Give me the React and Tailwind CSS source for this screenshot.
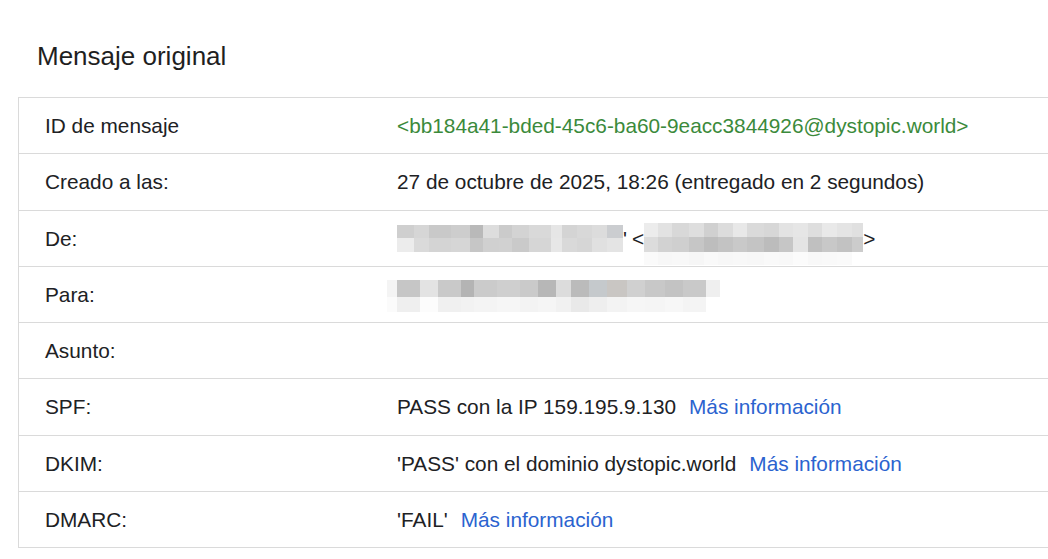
import React from "react";

const font = { fontFamily: '"Liberation Sans", Arial, sans-serif' };

// blurred blocks: each row is a list of [width, color]
const fromName = [
  [
    [17, "#cfcfcf"], [15, "#d6d6d6"], [22, "#c9c9c9"], [19, "#cdcdcd"], [13, "#b9b9b9"], [16, "#dddddd"], [13, "#cbcbcb"], [17, "#d3d3d3"], [22, "#d9d9d9"], [11, "#e6e6e6"], [15, "#d4d4d4"], [15, "#d8d8d8"], [15, "#dcdcdc"], [16, "#cbcdd0"],
  ],
  [
    [17, "#ececec"], [15, "#dadada"], [22, "#d4d4d4"], [19, "#d6d6d6"], [13, "#c6c6c6"], [16, "#d0d0d0"], [13, "#d1d1d1"], [17, "#cacaca"], [22, "#d6d6d6"], [11, "#e7e7e7"], [15, "#d9d9d9"], [15, "#d6d6d6"], [15, "#e0e0e0"], [16, "#e4e4e4"],
  ],
];

const fromMail = [
  [
    [14, "#ececec"], [14, "#e2e2e2"], [17, "#d8d8d8"], [15, "#dedede"], [14, "#d0d0d0"], [15, "#dcdcdc"], [14, "#e8e8e8"], [17, "#dadada"], [15, "#d7d7d7"], [14, "#e3e3e3"], [15, "#e6e6e6"], [14, "#dedede"], [15, "#e9e9e9"], [15, "#e4e4e4"], [11, "#e0e0e0"],
  ],
  [
    [14, "#dcdcdc"], [14, "#d2d2d2"], [17, "#cfcfcf"], [15, "#c6c6c6"], [14, "#bdbdbd"], [15, "#c3c3c3"], [14, "#c9c9c9"], [17, "#c4c4c4"], [15, "#bcbcbc"], [14, "#c6c6c6"], [15, "#e4e4e4"], [14, "#c0c0c0"], [15, "#c8c8c8"], [15, "#c2c2c2"], [11, "#cccccc"],
  ],
  [
    [14, "#fafafa"], [14, "#f7f7f7"], [17, "#f8f8f8"], [15, "#f6f6f6"], [14, "#f9f9f9"], [15, "#f7f7f7"], [14, "#f8f8f8"], [17, "#f7f7f7"], [15, "#f9f9f9"], [14, "#f8f8f8"], [15, "#fbfbfb"], [14, "#f8f8f8"], [15, "#f9f9f9"], [15, "#fafafa"], [11, "#ffffff"],
  ],
];

const toMail = [
  [
    [10, "#f4f4f4"], [23, "#c6c6c6"], [18, "#e3e3e3"], [23, "#c9c9c9"], [13, "#b4b4b4"], [23, "#cbcbcb"], [23, "#cfcfcf"], [18, "#cacaca"], [18, "#b7b7b7"], [15, "#dcdcdc"], [18, "#bbbbbb"], [18, "#c5c9cc"], [20, "#c9c6c3"], [18, "#d0d0d0"], [20, "#c8c8c8"], [18, "#c3c3c3"], [23, "#c9c9c9"], [14, "#efefef"],
  ],
  [
    [10, "#fbfbfb"], [23, "#efefef"], [18, "#fcfcfc"], [23, "#f0f0f0"], [13, "#f2f2f2"], [23, "#f4f4f4"], [23, "#f6f6f6"], [18, "#f3f3f3"], [18, "#f5f5f5"], [15, "#f1f1f1"], [18, "#e9e9e9"], [18, "#eeeeee"], [20, "#f3f3f3"], [18, "#f6f6f6"], [20, "#f5f5f5"], [18, "#f7f7f7"], [23, "#f4f4f4"], [14, "#ffffff"],
  ],
];

const Pixelated = ({ rows, rowHeights }) => (
  <span className="inline-flex flex-col align-middle">
    {rows.map((row, i) => (
      <span key={i} className="flex">
        {row.map(([w, c], j) => (
          <span
            key={j}
            className="block"
            style={{ width: w, height: rowHeights[i], background: c }}
          />
        ))}
      </span>
    ))}
  </span>
);

const More = () => (
  <span className="ml-[13px] text-[#2b63cf]">Más información</span>
);

const rows = [
  {
    label: "ID de mensaje",
    value: (
      <span className="text-[#3b8a3b]">
        &lt;bb184a41-bded-45c6-ba60-9eacc3844926@dystopic.world&gt;
      </span>
    ),
  },
  {
    label: "Creado a las:",
    value: "27 de octubre de 2025, 18:26 (entregado en 2 segundos)",
  },
  {
    label: "De:",
    value: (
      <span className="flex items-center">
        <Pixelated rows={fromName} rowHeights={[13, 14]} />
        <span>'</span>
        <span className="ml-[5px]">&lt;</span>
        <span className="mt-[12px]">
          <Pixelated rows={fromMail} rowHeights={[14, 15, 13]} />
        </span>
        <span>&gt;</span>
      </span>
    ),
  },
  {
    label: "Para:",
    value: (
      <span className="-ml-[10px] flex items-center pt-[4px]">
        <Pixelated rows={toMail} rowHeights={[17, 15]} />
      </span>
    ),
  },
  { label: "Asunto:", value: "" },
  {
    label: "SPF:",
    value: (
      <span>
        PASS con la IP 159.195.9.130
        <More />
      </span>
    ),
  },
  {
    label: "DKIM:",
    value: (
      <span>
        'PASS' con el dominio dystopic.world
        <More />
      </span>
    ),
  },
  {
    label: "DMARC:",
    value: (
      <span>
        'FAIL'
        <More />
      </span>
    ),
  },
];

const App = () => {
  return (
    <div
      className="h-[559px] w-[1048px] overflow-hidden bg-white text-[#202124]"
      style={font}
    >
      <h1 className="pl-[37px] pt-[39px] text-[26px] leading-[34px] font-normal text-[#1f1f1f]">
        Mensaje original
      </h1>
      <div className="ml-[18px] mt-[24px] w-[1100px] border-l border-t border-[#dadada]">
        {rows.map((row) => (
          <div
            key={row.label}
            className="flex h-[56.25px] items-center border-b border-[#dadada] text-[20.8px]"
          >
            <div className="w-[378px] shrink-0 pl-[26px]">{row.label}</div>
            <div className="flex items-center">{row.value}</div>
          </div>
        ))}
      </div>
    </div>
  );
};

export default App;
